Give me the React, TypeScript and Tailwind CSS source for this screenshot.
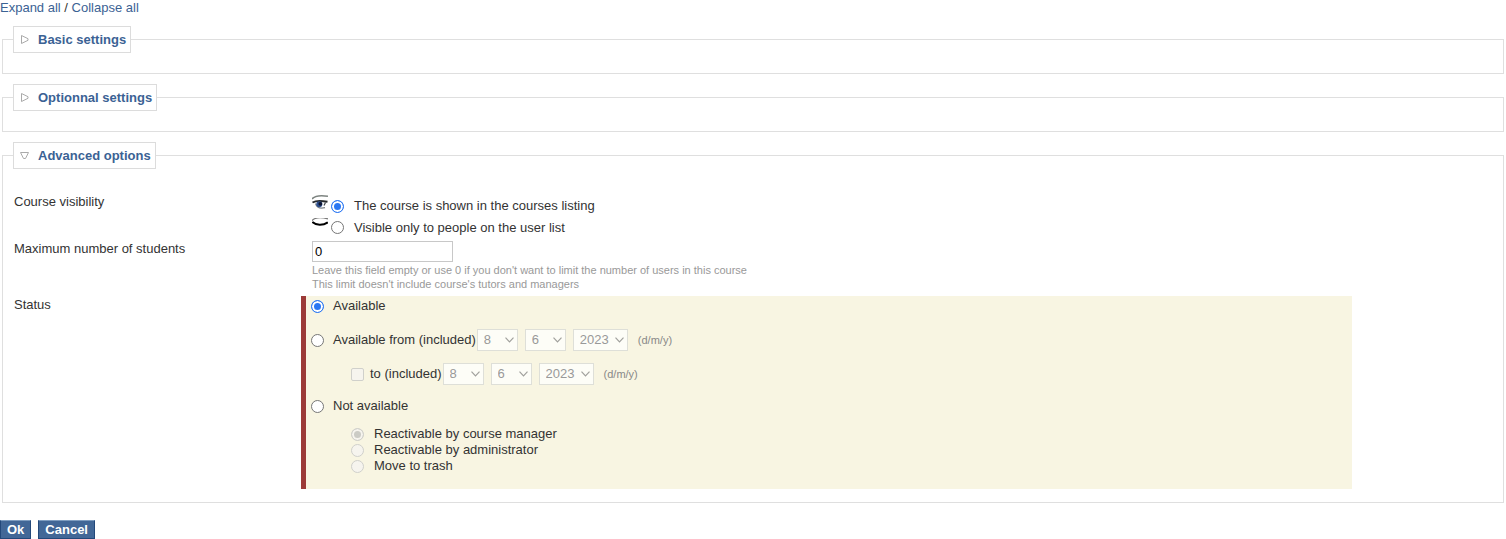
import { useState } from "react";
import type { ReactNode } from "react";

const radioClass =
  "m-0 h-[13px] w-[13px] shrink-0 appearance-none rounded-full border border-[#767676] bg-white checked:border-[#2a77f3] checked:bg-[#2a77f3] checked:shadow-[inset_0_0_0_2px_#fff] disabled:border-[#d0d0cb] disabled:bg-[#f6f4ee] disabled:checked:border-[#d0d0cb] disabled:checked:bg-[#cbcbc5] disabled:checked:shadow-[inset_0_0_0_2px_#f6f4ee]";

const buttonClass =
  "h-[19px] border border-[#23487a] border-t-[#7f9dc0] bg-[#426797] px-[6px] font-bold text-white";

function OpenEye() {
  return (
    <svg width="16" height="16" viewBox="0 0 16 16" fill="none" aria-hidden="true">
      <path d="M0 5C2.500 1.800 7 .8 16 2.200" stroke="#7d8480" strokeWidth="1.500" />
      <path d="M.5 8.500C3 7 7 6.200 15.500 7.800" stroke="#26292b" strokeWidth="1.900" />
      <path d="M3.500 9.500c1 3.200 4 5.600 9.500 4.200" stroke="#7c8288" strokeWidth="1.200" />
      <circle cx="7.300" cy="10.200" r="3" fill="#2d4f8e" />
      <circle cx="8.300" cy="9.800" r="1.900" fill="#0b1430" />
      <path d="M13.500 8.500l-1.500 3" stroke="#43484d" strokeWidth="1.200" />
    </svg>
  );
}

function ClosedEye() {
  return (
    <svg width="16" height="16" viewBox="0 0 16 16" fill="none" aria-hidden="true">
      <path d="M0 2.700C2.500-.3 9-.8 16 .8" stroke="#777" strokeWidth="1.200" />
      <path d="M.3 4C4 7.600 11 7.900 15.800 4.300" stroke="#000" strokeWidth="2" />
    </svg>
  );
}

function Section({
  title,
  open,
  onToggle,
  children,
}: {
  title: string;
  open: boolean;
  onToggle: () => void;
  children?: ReactNode;
}) {
  return (
    <fieldset className="mx-[2px] mb-[10px] border border-[#dfdfdf] px-[10px]">
      <legend className="border border-[#dcdcdc] bg-white">
        <button
          type="button"
          aria-expanded={open}
          onClick={onToggle}
          className="flex h-[25px] items-center gap-[9px] pr-1 pl-[6px] font-bold text-[#3b6294]"
        >
          <svg width="9" height="9" viewBox="0 0 9 9" fill="none" stroke="#aaa" aria-hidden="true">
            {open ? <path d="M.5 1.500h8L5.500 7.500h-2z" /> : <path d="M1.500.5v8L8 5.300V3.700z" />}
          </svg>
          {title}
        </button>
      </legend>
      {open ? children : <div className="h-5" />}
    </fieldset>
  );
}

function DateSelect({ label, value, wide }: { label: string; value: string; wide?: boolean }) {
  return (
    <span className="relative flex">
      <select
        aria-label={label}
        disabled
        defaultValue={value}
        className={
          (wide ? "w-[55px]" : "w-[41px]") +
          " h-[22px] appearance-none border border-[#dedfd8] bg-[#fdfdf7] pl-[6px] text-[#999] opacity-100"
        }
      >
        <option>{value}</option>
      </select>
      <svg
        className="pointer-events-none absolute top-2 right-1"
        width="9"
        height="6"
        viewBox="0 0 9 6"
        fill="none"
        stroke="#a0a09c"
        strokeWidth="1.200"
        aria-hidden="true"
      >
        <path d="M.5.700l4 4.100 4-4.100" />
      </svg>
    </span>
  );
}

function DateFields({ name }: { name: string }) {
  return (
    <span className="flex items-center gap-[7px]">
      <DateSelect label={name + " day"} value="8" />
      <DateSelect label={name + " month"} value="6" />
      <DateSelect label={name + " year"} value="2023" wide />
      <span className="pl-[3px] text-[11px] text-[#888]">(d/m/y)</span>
    </span>
  );
}

export default function App() {
  const [open, setOpen] = useState([false, false, true]);
  const toggle = (i: number) => setOpen(open.map((v, k) => (k === i ? !v : v)));

  return (
    <form
      className="bg-white font-['Liberation_Sans',Arial,sans-serif] text-[13px] leading-4 text-[#333]"
      onSubmit={(e) => e.preventDefault()}
    >
      <div className="mb-[10px]">
        <a href="#expand" className="text-[#3b6294]" onClick={() => setOpen([true, true, true])}>
          Expand all
        </a>
        {" / "}
        <a href="#collapse" className="text-[#3b6294]" onClick={() => setOpen([false, false, false])}>
          Collapse all
        </a>
      </div>

      <Section title="Basic settings" open={open[0]} onToggle={() => toggle(0)} />
      <Section title="Optionnal settings" open={open[1]} onToggle={() => toggle(1)} />
      <Section title="Advanced options" open={open[2]} onToggle={() => toggle(2)}>
        <div className="px-px pt-[25px] pb-[13px]">
          <div className="flex" role="radiogroup" aria-labelledby="visibility">
            <div id="visibility" className="w-[287px] shrink-0">
              Course visibility
            </div>
            <div className="flex-1 pb-[3px] pl-[11px]">
              <div className="flex h-6 gap-[3px]">
                <OpenEye />
                <label className="flex items-center gap-[10px]">
                  <input type="radio" name="visibility" defaultChecked className={radioClass} />
                  The course is shown in the courses listing
                </label>
              </div>
              <div className="flex h-[19px] gap-[3px]">
                <ClosedEye />
                <label className="flex items-center gap-[10px]">
                  <input type="radio" name="visibility" className={radioClass} />
                  Visible only to people on the user list
                </label>
              </div>
            </div>
          </div>

          <div className="flex">
            <label htmlFor="max" className="w-[287px] shrink-0 pt-px">
              Maximum number of students
            </label>
            <div className="flex-1 pt-px pb-[5px] pl-[11px]">
              <input
                id="max"
                type="text"
                defaultValue="0"
                className="block h-[21px] w-[141px] border border-[#c8c8c8] bg-white px-[2px] text-black"
              />
              <p className="pt-px text-[11px] leading-[14px] text-[#999]">
                Leave this field empty or use 0 if you don't want to limit the number of users in this course
                <br />
                This limit doesn't include course's tutors and managers
              </p>
            </div>
          </div>

          <div className="flex" role="radiogroup" aria-labelledby="status">
            <div id="status" className="w-[287px] shrink-0 pt-px">
              Status
            </div>
            <div className="mr-[140px] flex-1 border-l-[5px] border-[#9c3a38] bg-[#f8f5e2] pb-[15px] pl-[5px]">
              <label className="flex h-5 items-center gap-[9px]">
                <input type="radio" name="status" defaultChecked className={radioClass} />
                Available
              </label>
              <div className="flex items-center gap-px pt-[13px]">
                <label className="flex items-center gap-[9px]">
                  <input type="radio" name="status" className={radioClass} />
                  Available from (included)
                </label>
                <DateFields name="From" />
              </div>
              <div className="flex items-center gap-px pt-3 pl-10">
                <label className="flex items-center gap-[6px]">
                  <input
                    type="checkbox"
                    disabled
                    className="m-0 h-[13px] w-[13px] appearance-none rounded-[2px] border border-[#d0d0cb] bg-[#f6f4ee]"
                  />
                  to (included)
                </label>
                <DateFields name="To" />
              </div>
              <label className="mt-[11px] flex h-5 items-center gap-[9px]">
                <input type="radio" name="status" className={radioClass} />
                Not available
              </label>
              <div className="pt-[10px] pl-10">
                {["Reactivable by course manager", "Reactivable by administrator", "Move to trash"].map((text, i) => (
                  <label key={text} className="flex h-4 items-center gap-[10px]">
                    <input type="radio" name="inactive" disabled defaultChecked={i === 0} className={radioClass} />
                    {text}
                  </label>
                ))}
              </div>
            </div>
          </div>
        </div>
      </Section>

      <div className="flex gap-[7px] pt-[7px]">
        <button type="submit" className={buttonClass}>
          Ok
        </button>
        <button type="button" className={buttonClass}>
          Cancel
        </button>
      </div>
    </form>
  );
}
